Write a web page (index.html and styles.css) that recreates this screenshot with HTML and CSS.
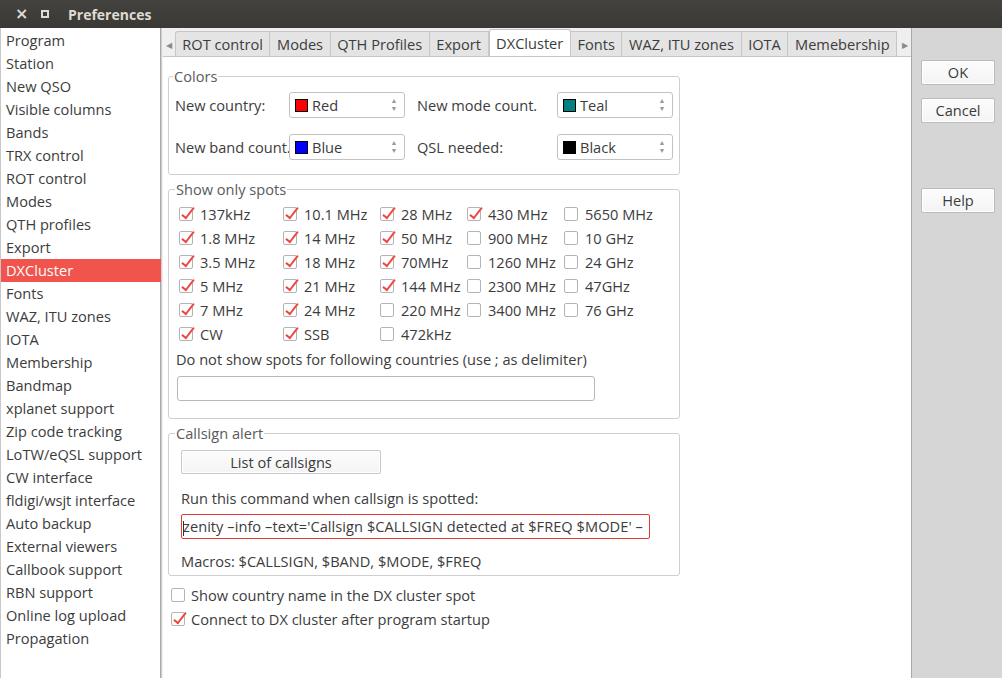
FILE: index.html
```html
<!DOCTYPE html>
<html>
<head>
<meta charset="utf-8">
<link rel="stylesheet" href="styles.css">
</head>
<body>
<div class="window">
  <div class="titlebar">
    <span class="tb-close">×</span>
    <span class="tb-max"></span>
    <span class="tb-title">Preferences</span>
  </div>
  <div class="main">
    <ul class="sidebar">
      <li>Program</li><li>Station</li><li>New QSO</li><li>Visible columns</li><li>Bands</li>
      <li>TRX control</li><li>ROT control</li><li>Modes</li><li>QTH profiles</li><li>Export</li>
      <li class="sel">DXCluster</li><li>Fonts</li><li>WAZ, ITU zones</li><li>IOTA</li><li>Membership</li>
      <li>Bandmap</li><li>xplanet support</li><li>Zip code tracking</li><li>LoTW/eQSL support</li>
      <li>CW interface</li><li>fldigi/wsjt interface</li><li>Auto backup</li><li>External viewers</li>
      <li>Callbook support</li><li>RBN support</li><li>Online log upload</li><li>Propagation</li>
    </ul>
    <div class="center">
      <div class="tabbar">
        <span class="tab-arrow">◀</span>
        <div class="tabs">
          <span class="tab">ROT control</span>
          <span class="tab">Modes</span>
          <span class="tab">QTH Profiles</span>
          <span class="tab">Export</span>
          <span class="tab active">DXCluster</span>
          <span class="tab">Fonts</span>
          <span class="tab">WAZ, ITU zones</span>
          <span class="tab">IOTA</span>
          <span class="tab">Memebership</span>
        </div>
        <span class="tab-arrow right">▶</span>
      </div>
      <div class="page">
        <fieldset class="group colors">
          <legend>Colors</legend>
          <div class="color-grid">
            <span class="lbl">New country:</span>
            <div class="combo"><span class="sw" style="background:#ff0000"></span><span class="ctext">Red</span><span class="spin">▲<br>▼</span></div>
            <span class="lbl">New mode count.</span>
            <div class="combo"><span class="sw" style="background:#008080"></span><span class="ctext">Teal</span><span class="spin">▲<br>▼</span></div>
            <span class="lbl">New band count.</span>
            <div class="combo"><span class="sw" style="background:#0000ff"></span><span class="ctext">Blue</span><span class="spin">▲<br>▼</span></div>
            <span class="lbl">QSL needed:</span>
            <div class="combo"><span class="sw" style="background:#000000"></span><span class="ctext">Black</span><span class="spin">▲<br>▼</span></div>
          </div>
        </fieldset>

        <fieldset class="group spots">
          <legend>Show only spots</legend>
          <div class="cb-grid">
            <label class="cb"><span class="box on"></span>137kHz</label>
            <label class="cb"><span class="box on"></span>10.1 MHz</label>
            <label class="cb"><span class="box on"></span>28 MHz</label>
            <label class="cb"><span class="box on"></span>430 MHz</label>
            <label class="cb"><span class="box"></span>5650 MHz</label>

            <label class="cb"><span class="box on"></span>1.8 MHz</label>
            <label class="cb"><span class="box on"></span>14 MHz</label>
            <label class="cb"><span class="box on"></span>50 MHz</label>
            <label class="cb"><span class="box"></span>900 MHz</label>
            <label class="cb"><span class="box"></span>10 GHz</label>

            <label class="cb"><span class="box on"></span>3.5 MHz</label>
            <label class="cb"><span class="box on"></span>18 MHz</label>
            <label class="cb"><span class="box on"></span>70MHz</label>
            <label class="cb"><span class="box"></span>1260 MHz</label>
            <label class="cb"><span class="box"></span>24 GHz</label>

            <label class="cb"><span class="box on"></span>5 MHz</label>
            <label class="cb"><span class="box on"></span>21 MHz</label>
            <label class="cb"><span class="box on"></span>144 MHz</label>
            <label class="cb"><span class="box"></span>2300 MHz</label>
            <label class="cb"><span class="box"></span>47GHz</label>

            <label class="cb"><span class="box on"></span>7 MHz</label>
            <label class="cb"><span class="box on"></span>24 MHz</label>
            <label class="cb"><span class="box"></span>220 MHz</label>
            <label class="cb"><span class="box"></span>3400 MHz</label>
            <label class="cb"><span class="box"></span>76 GHz</label>

            <label class="cb"><span class="box on"></span>CW</label>
            <label class="cb"><span class="box on"></span>SSB</label>
            <label class="cb"><span class="box"></span>472kHz</label>
          </div>
          <div class="note">Do not show spots for following countries (use ; as delimiter)</div>
          <div class="textbox countries"></div>
        </fieldset>

        <fieldset class="group alert">
          <legend>Callsign alert</legend>
          <div class="btn listbtn">List of callsigns</div>
          <div class="note run">Run this command when callsign is spotted:</div>
          <div class="textbox cmd"><span class="caret"></span>zenity –info –text='Callsign $CALLSIGN detected at $FREQ $MODE' –</div>
          <div class="note macros">Macros: $CALLSIGN, $BAND, $MODE, $FREQ</div>
        </fieldset>

        <div class="bottom-checks">
          <label class="cb"><span class="box"></span>Show country name in the DX cluster spot</label>
          <label class="cb"><span class="box on"></span>Connect to DX cluster after program startup</label>
        </div>
      </div>
    </div>
    <div class="rightpanel">
      <div class="btn">OK</div>
      <div class="btn">Cancel</div>
      <div class="btn help">Help</div>
    </div>
  </div>
</div>
</body>
</html>
```

FILE: styles.css
```css
* { box-sizing: border-box; }
html, body {
  margin: 0;
  padding: 0;
  width: 1002px;
  height: 678px;
  overflow: hidden;
  font-family: "Open Sans", "Noto Sans", sans-serif;
  font-size: 14.6px;
  color: #3c3c3c;
  background: #d6d6d6;
}
.window { width: 1002px; height: 678px; display: flex; flex-direction: column; }

.titlebar {
  height: 28px;
  flex: none;
  background: linear-gradient(#43423e, #3a3935);
  display: flex;
  align-items: center;
  color: #dfdbd2;
}
.tb-close { margin-left: 15px; font-size: 16px; font-weight: bold; line-height: 1; width: 11px; font-family: "DejaVu Sans", sans-serif; }
.tb-max { margin-left: 15px; width: 8px; height: 8px; border: 2px solid #dfdbd2; }
.tb-title { margin-left: 19px; font-weight: bold; font-size: 14px; font-family: "Open Sans", sans-serif; }

.main { flex: 1; display: flex; min-height: 0; }

.sidebar {
  list-style: none;
  margin: 0;
  padding: 1px 0 0 0;
  width: 161px;
  flex: none;
  background: #fff;
  border-right: 1px solid #a8a8a8;
  border-left: 1px solid #c8c8c8;
}
.sidebar li {
  height: 23px;
  line-height: 23px;
  padding-left: 5px;
  white-space: nowrap;
}
.sidebar li.sel { background: #f0544c; color: #fff; margin-right: -1px; }

.center {
  width: 751px;
  flex: none;
  display: flex;
  flex-direction: column;
  background: #efefef;
  border-left: 1px solid #d0d0d0;
  border-right: 1px solid #a8a8a8;
}
.tabbar {
  height: 28px;
  flex: none;
  display: flex;
  align-items: flex-end;
  padding-left: 1px;
}
.tab-arrow {
  width: 15px;
  align-self: center;
  font-size: 8px;
  color: #8a8a8a;
  text-align: center;
  margin-top: 4px;
}
.tab-arrow.right { margin-left: 2px; }
.tabs { display: flex; align-items: flex-end; height: 28px; }
.tab {
  height: 25px;
  line-height: 24px;
  padding: 0 6.6px;
  background: #e4e4e4;
  border: 1px solid #c6c6c6;
  border-bottom: none;
  border-left: none;
  white-space: nowrap;
}
.tab:first-child { border-left: 1px solid #c6c6c6; border-radius: 3px 0 0 0; }
.tab.active {
  height: 28px;
  line-height: 27px;
  background: #fff;
  border: 1px solid #c6c6c6;
  border-bottom: none;
  border-radius: 3px 3px 0 0;
  margin-bottom: -1px;
  padding: 0 6.6px;
}
.tab.active + .tab { border-left: none; }

.page {
  flex: 1;
  background: #fff;
  border-top: 1px solid #c6c6c6;
  margin-left: 1px;
  padding: 12px 0 0 5px;
}

.group {
  margin: 0;
  width: 512px;
  border: 1px solid #cfcfcf;
  border-radius: 3px;
  padding: 0;
}
.group legend {
  padding: 0 1px;
  color: #5a5a5a;
  line-height: 14px;
}
.colors { height: 106px; padding: 9px 0 0 6px; }
.colors legend { margin-left: -2px; }
.color-grid {
  display: grid;
  grid-template-columns: 114px 128px 140px 116px;
  row-gap: 16px;
  align-items: center;
}
.lbl { white-space: nowrap; }
.combo {
  width: 116px;
  height: 26px;
  border: 1px solid #c2c2c2;
  border-radius: 3px;
  display: flex;
  align-items: center;
  padding-left: 5px;
  background: #fff;
}
.sw { width: 13px; height: 13px; border: 1px solid #000; flex: none; }
.ctext { margin-left: 4px; flex: 1; }
.spin {
  font-size: 7px;
  line-height: 8px;
  color: #9a9a9a;
  text-align: center;
  width: 16px;
  margin-right: 2px;
}

.spots { margin-top: 7px; height: 237px; padding: 6px 0 0 10px; }
.spots legend { margin-left: -4px; }
.cb-grid {
  display: grid;
  grid-template-columns: 104px 97px 87px 97px auto;
  grid-auto-rows: 24px;
  align-items: center;
}
.cb { display: flex; align-items: center; white-space: nowrap; }
.box {
  width: 14px;
  height: 14px;
  border: 1px solid #b4b4b4;
  border-radius: 2px;
  background: #fff;
  margin-right: 7px;
  flex: none;
  position: relative;
}
.box.on::after {
  content: "";
  position: absolute;
  left: 5px;
  top: -3px;
  width: 4px;
  height: 12px;
  border-right: 2px solid #ee4740;
  border-bottom: 2px solid #ee4740;
  transform: rotate(38deg);
}
.note { white-space: nowrap; }
.spots .note { margin-top: 4px; margin-left: -3px; line-height: 18px; }
.textbox {
  border: 1px solid #b8b8b8;
  border-radius: 3px;
  height: 25px;
  background: #fff;
}
.countries { width: 418px; margin-top: 8px; margin-left: -2px; }

.alert { margin-top: 7px; height: 150px; padding: 10px 0 0 12px; }
.alert legend { margin-left: -6px; }
.btn {
  border: 1px solid #c8c8c8;
  border-radius: 2px;
  background: linear-gradient(#fcfcfc, #f4f4f4);
  text-align: center;
  height: 24px;
  line-height: 22px;
  box-shadow: inset 0 0 0 1px #fff;
}
.listbtn { width: 200px; }
.run { margin-top: 14px; line-height: 20px; }
.cmd {
  width: 469px;
  margin-top: 6px;
  border-color: #e03b35;
  border-radius: 2px;
  height: 25px;
  line-height: 23px;
  padding-left: 1px;
  overflow: hidden;
  white-space: nowrap;
  letter-spacing: 0.05px;
}
.caret { display: inline-block; width: 1px; height: 15px; background: #333; vertical-align: middle; margin-right: -1px; }
.macros { margin-top: 12px; line-height: 20px; }

.bottom-checks { display: flex; flex-direction: column; margin-top: 7px; margin-left: 3px; }
.bottom-checks .cb { height: 24px; }
.bottom-checks .box { margin-right: 6px; }

.rightpanel {
  flex: 1;
  background: #d6d6d6;
  padding: 32px 6px 0 9px;
  display: flex;
  flex-direction: column;
  gap: 13px;
}
.rightpanel .btn { height: 25px; line-height: 23px; width: 74px; border-color: #bcbcbc; }
.rightpanel .help { margin-top: 52px; }
```
